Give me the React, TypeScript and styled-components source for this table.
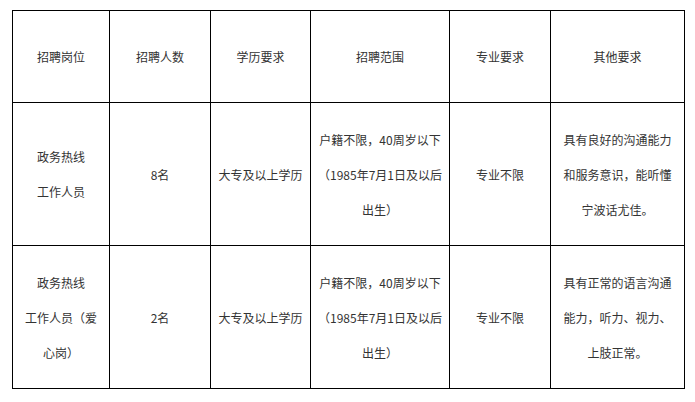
import React from "react";
import styled, { createGlobalStyle } from "styled-components";

interface Job {
  position: string[];
  count: string;
  education: string;
  range: string;
  major: string;
  other: string;
}

const GlobalStyle = createGlobalStyle`
  html, body {
    margin: 0;
    padding: 0;
    background: #fff;
  }
  body {
    font-family: "Noto Sans CJK SC", "Noto Sans", sans-serif;
  }
`;

const Page = styled.div`
  padding: 10px 0 0 12px;
`;

const Table = styled.table`
  border-collapse: collapse;
  table-layout: fixed;
  width: 673px;
  color: #333;
  font-size: 12px;
`;

const Row = styled.tr<{ $height: number }>`
  height: ${(p) => p.$height}px;
`;

const Cell = styled.td<{ $pad?: number }>`
  border: 1px solid #000;
  padding: 0 ${(p) => p.$pad ?? 6}px;
  text-align: center;
  vertical-align: middle;
  line-height: 35px;
  word-break: break-all;
`;

const HeadCell = styled(Cell).attrs({ as: "th" })`
  font-weight: normal;
`;

const Line = styled.div``;

const columns = [97, 101, 100, 139, 101, 134];
const headers = ["招聘岗位", "招聘人数", "学历要求", "招聘范围", "专业要求", "其他要求"];

const jobs: Job[] = [
  {
    position: ["政务热线", "工作人员"],
    count: "8名",
    education: "大专及以上学历",
    range: "户籍不限，40周岁以下（1985年7月1日及以后出生）",
    major: "专业不限",
    other: "具有良好的沟通能力和服务意识，能听懂宁波话尤佳。",
  },
  {
    position: ["政务热线", "工作人员（爱心岗）"],
    count: "2名",
    education: "大专及以上学历",
    range: "户籍不限，40周岁以下（1985年7月1日及以后出生）",
    major: "专业不限",
    other: "具有正常的语言沟通能力，听力、视力、上肢正常。",
  },
];

const App = () => {
  return (
    <Page>
      <GlobalStyle />
      <Table>
        <colgroup>
          {columns.map((w, i) => (
            <col key={i} style={{ width: w }} />
          ))}
        </colgroup>
        <thead>
          <Row $height={92}>
            {headers.map((h) => (
              <HeadCell key={h}>{h}</HeadCell>
            ))}
          </Row>
        </thead>
        <tbody>
          {jobs.map((job, index) => (
            <Row $height={143} key={index}>
              <Cell $pad={8}>
                {job.position.map((p) => (
                  <Line key={p}>{p}</Line>
                ))}
              </Cell>
              <Cell>{job.count}</Cell>
              <Cell>{job.education}</Cell>
              <Cell $pad={4}>{job.range}</Cell>
              <Cell>{job.major}</Cell>
              <Cell $pad={8}>{job.other}</Cell>
            </Row>
          ))}
        </tbody>
      </Table>
    </Page>
  );
};

export default App;
